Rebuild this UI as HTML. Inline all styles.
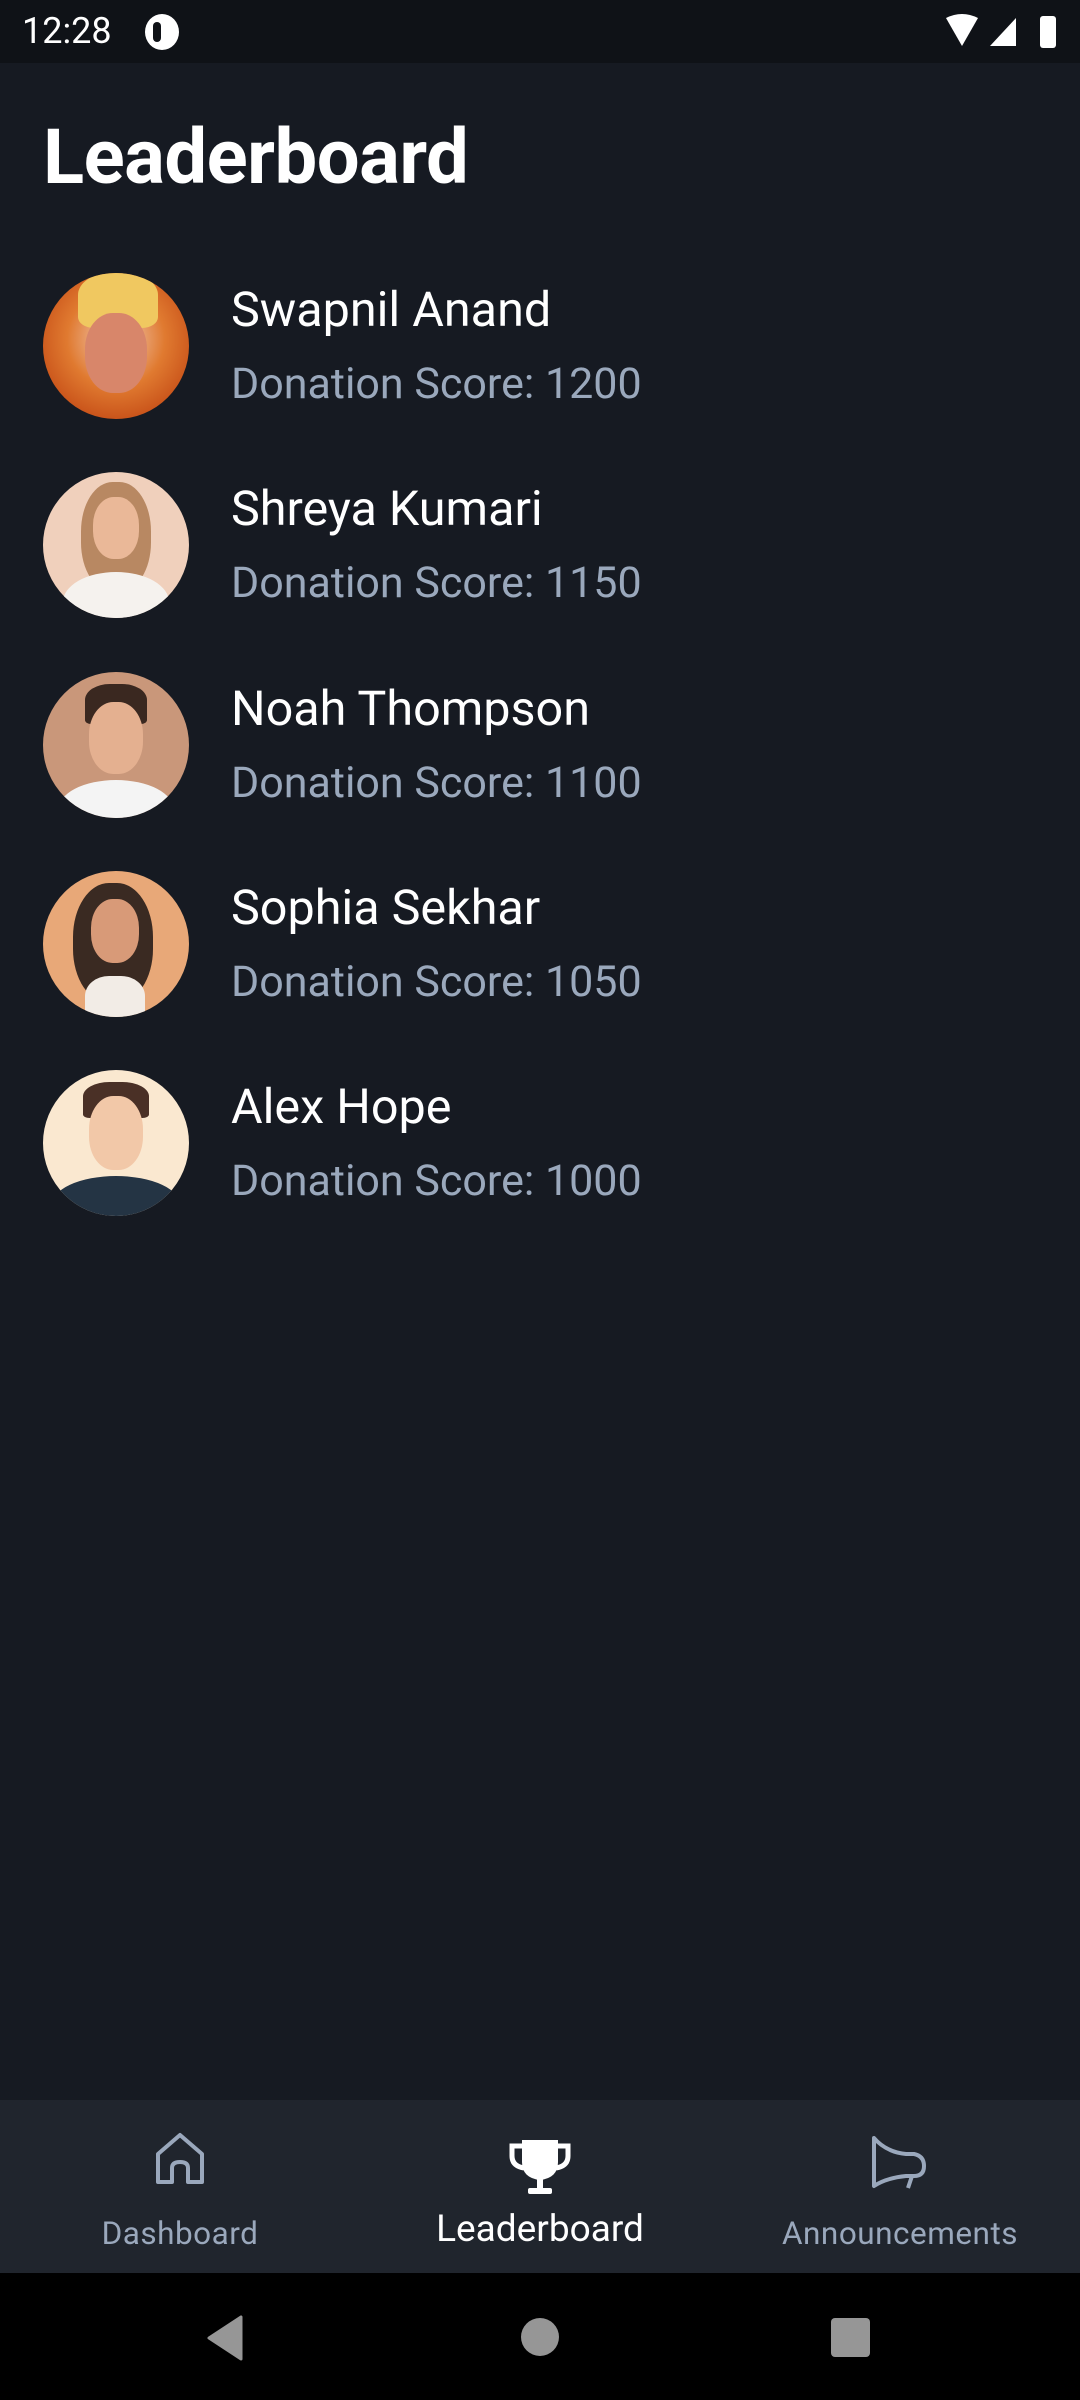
<!DOCTYPE html>
<html><head><meta charset="utf-8"><style>
*{margin:0;padding:0;box-sizing:border-box}
body{width:1080px;height:2400px;background:#161a22;font-family:"Roboto","Liberation Sans",sans-serif;position:relative;overflow:hidden;color:#fff}
.sb{position:absolute;left:0;top:0;width:1080px;height:63px;background:#0f1217}
.t{position:absolute;font-size:36px;left:22px;top:10px;color:#fff}
h1{position:absolute;left:43px;top:112px;font-size:76px;font-weight:bold;letter-spacing:-0.5px}
.row{position:absolute;left:43px;width:1000px;height:146px}
.av{position:absolute;left:0;top:0;width:146px;height:146px;border-radius:50%;overflow:hidden}
.nm{position:absolute;left:188px;top:8px;font-size:48.5px;white-space:nowrap}
.sc{position:absolute;left:188px;top:86px;font-size:43px;color:#9aa8bc;white-space:nowrap}
.nav{position:absolute;left:0;top:2100px;width:1080px;height:173px;background:#20252d}
.lbl{position:absolute;top:2215px;font-size:31.5px;color:#9aa8bc;transform:translateX(-50%);white-space:nowrap;letter-spacing:0.5px}
.sys{position:absolute;left:0;top:2273px;width:1080px;height:127px;background:#000}
</style></head><body>
<div class="sb"><div class="t">12:28</div>
<div style="position:absolute;left:145px;top:14px;width:34px;height:36px;border-radius:50%;background:#fff"></div>
<div style="position:absolute;left:153px;top:22px;width:8px;height:20px;border-radius:4px;background:#0f1217"></div>
<svg style="position:absolute;left:940px;top:14px" width="120" height="36" viewBox="0 0 120 36"><path d="M6 4 Q22 -4 38 4 L22 32 Z" fill="#fff"/><path d="M50 32 L76 4 L76 32 Z" fill="#fff"/><rect x="100" y="2" width="16" height="32" rx="3" fill="#fff"/></svg>
</div>
<h1>Leaderboard</h1>

<div class="row" style="top:273px"><div class="av" style="background:radial-gradient(circle at 50% 45%,#e8a070 0 25%,#e07a30 45%,#c9531a 75%,#4a3530 100%)"><div style="position:absolute;left:35px;top:0;width:80px;height:55px;border-radius:40% 40% 20% 20%;background:#f0c860"></div><div style="position:absolute;left:42px;top:40px;width:62px;height:80px;border-radius:45%;background:#d8866a"></div></div><div class="nm">Swapnil Anand</div><div class="sc">Donation Score: 1200</div></div>

<div class="row" style="top:472px"><div class="av" style="background:#f0d0bc"><div style="position:absolute;left:38px;top:10px;width:70px;height:110px;border-radius:45%;background:#b88862"></div><div style="position:absolute;left:50px;top:25px;width:46px;height:62px;border-radius:45%;background:#eab898"></div><div style="position:absolute;left:20px;top:100px;width:106px;height:60px;border-radius:50% 50% 0 0;background:#f5f2ee"></div></div><div class="nm">Shreya Kumari</div><div class="sc">Donation Score: 1150</div></div>

<div class="row" style="top:672px"><div class="av" style="background:#c9977a"><div style="position:absolute;left:42px;top:12px;width:62px;height:40px;border-radius:40% 40% 10% 10%;background:#3a2820"></div><div style="position:absolute;left:46px;top:30px;width:54px;height:72px;border-radius:45%;background:#e4b090"></div><div style="position:absolute;left:15px;top:108px;width:116px;height:60px;border-radius:50% 50% 0 0;background:#f4f4f4"></div></div><div class="nm">Noah Thompson</div><div class="sc">Donation Score: 1100</div></div>

<div class="row" style="top:871px"><div class="av" style="background:#e8a878"><div style="position:absolute;left:30px;top:12px;width:80px;height:120px;border-radius:45%;background:#3a2a22"></div><div style="position:absolute;left:48px;top:28px;width:48px;height:64px;border-radius:45%;background:#d89a78"></div><div style="position:absolute;left:42px;top:105px;width:60px;height:50px;border-radius:40% 40% 0 0;background:#f2ece6"></div></div><div class="nm">Sophia Sekhar</div><div class="sc">Donation Score: 1050</div></div>

<div class="row" style="top:1070px"><div class="av" style="background:#fae8d0"><div style="position:absolute;left:40px;top:12px;width:66px;height:36px;border-radius:40% 40% 10% 10%;background:#4a3026"></div><div style="position:absolute;left:46px;top:26px;width:54px;height:74px;border-radius:45%;background:#f2c8a8"></div><div style="position:absolute;left:8px;top:106px;width:130px;height:60px;border-radius:50% 50% 0 0;background:#243444"></div></div><div class="nm">Alex Hope</div><div class="sc">Donation Score: 1000</div></div>

<div class="nav"></div>
<svg style="position:absolute;left:154px;top:2132px" width="52" height="56" viewBox="0 0 52 56"><path d="M4 50 V22 L26 3 L48 22 V50 H34 V36 Q34 30 26 30 Q18 30 18 36 V50 Z" fill="none" stroke="#9aa8bc" stroke-width="4" stroke-linejoin="round"/></svg>
<svg style="position:absolute;left:508px;top:2138px" width="64" height="60" viewBox="0 0 64 60"><path d="M14 2 H50 V24 Q50 40 32 42 Q14 40 14 24 Z" fill="#fff"/><path d="M14 8 H4 V18 Q4 28 16 30 M50 8 H60 V18 Q60 28 48 30" fill="none" stroke="#fff" stroke-width="5"/><rect x="29" y="40" width="6" height="12" fill="#fff"/><rect x="20" y="50" width="24" height="6" rx="2" fill="#fff"/></svg>
<svg style="position:absolute;left:868px;top:2134px" width="60" height="56" viewBox="0 0 60 56"><path d="M6 4 Q18 18 38 20 L46 20 Q56 22 56 32 Q56 42 46 42 L38 42 Q18 44 6 52 Z M44 42 L40 54" fill="none" stroke="#9aa8bc" stroke-width="4" stroke-linejoin="round"/></svg>
<div class="lbl" style="left:180px">Dashboard</div>
<div class="lbl" style="left:540px;color:#fff;font-size:37px;top:2208px;letter-spacing:0">Leaderboard</div>
<div class="lbl" style="left:900px">Announcements</div>
<div class="sys">
<svg style="position:absolute;left:205px;top:42px" width="40" height="46"><path d="M36 2 V44 L4 23 Z" fill="#969696" stroke="#969696" stroke-width="3" stroke-linejoin="round"/></svg>
<div style="position:absolute;left:521px;top:45px;width:38px;height:38px;border-radius:50%;background:#969696"></div>
<div style="position:absolute;left:831px;top:45px;width:39px;height:39px;border-radius:4px;background:#969696"></div>
</div>
</body></html>
